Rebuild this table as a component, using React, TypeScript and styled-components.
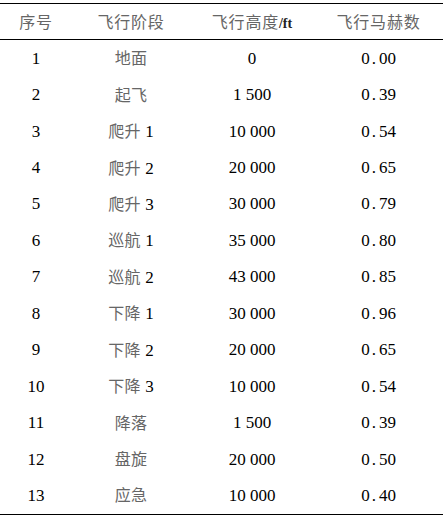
import * as React from 'react';
import styled, { createGlobalStyle } from 'styled-components';

const GlobalStyle = createGlobalStyle`
  html, body {
    margin: 0;
    padding: 0;
    background: #ffffff;
  }
  body {
    font-family: "Liberation Serif", "Times New Roman", serif;
    color: #000000;
  }
`;

const Wrapper = styled.div`
  width: 443px;
  padding-top: 3px;
`;

const Table = styled.div`
  border-top: 1px solid #000;
  border-bottom: 1px solid #000;
`;

const Row = styled.div<{ $head?: boolean }>`
  display: grid;
  grid-template-columns: 72px 118px 124px 1fr;
  align-items: center;
  height: ${(p) => (p.$head ? '35px' : '36.45px')};
  border-bottom: ${(p) => (p.$head ? '1px solid #000' : 'none')};
`;

const Cell = styled.div`
  text-align: center;
  font-family: "Liberation Serif", serif;
  font-size: 17px;
  line-height: 1;
  white-space: nowrap;
`;

const Han = styled.span`
  font-family: "Noto Sans CJK SC", sans-serif;
  font-size: 16px;
  color: #666666;
  letter-spacing: 0.3px;
`;

const HeadHan = styled(Han)`
  letter-spacing: 0.8px;
`;

const Unit = styled.span`
  font-family: "Liberation Serif", serif;
  font-weight: bold;
  font-size: 14px;
  color: #222;
`;

const Dot = styled.span`
  margin: 0 3px 0 2px;
`;

const rows: [string, string, string, string, string][] = [
  ['1', '地面', '', '0', '0.00'],
  ['2', '起飞', '', '1 500', '0.39'],
  ['3', '爬升', '1', '10 000', '0.54'],
  ['4', '爬升', '2', '20 000', '0.65'],
  ['5', '爬升', '3', '30 000', '0.79'],
  ['6', '巡航', '1', '35 000', '0.80'],
  ['7', '巡航', '2', '43 000', '0.85'],
  ['8', '下降', '1', '30 000', '0.96'],
  ['9', '下降', '2', '20 000', '0.65'],
  ['10', '下降', '3', '10 000', '0.54'],
  ['11', '降落', '', '1 500', '0.39'],
  ['12', '盘旋', '', '20 000', '0.50'],
  ['13', '应急', '', '10 000', '0.40'],
];

const Mach: React.FC<{ value: string }> = ({ value }) => {
  const [a, b] = value.split('.');
  return (
    <>
      {a}
      <Dot>.</Dot>
      {b}
    </>
  );
};

const App: React.FC = () => (
  <Wrapper>
    <GlobalStyle />
    <Table>
      <Row $head>
        <Cell><HeadHan>序号</HeadHan></Cell>
        <Cell><HeadHan>飞行阶段</HeadHan></Cell>
        <Cell><HeadHan>飞行高度</HeadHan><Unit>/ft</Unit></Cell>
        <Cell><HeadHan>飞行马赫数</HeadHan></Cell>
      </Row>
      {rows.map(([no, phase, n, alt, mach]) => (
        <Row key={no}>
          <Cell>{no}</Cell>
          <Cell>
            <Han>{phase}</Han>
            {n && ` ${n}`}
          </Cell>
          <Cell>{alt}</Cell>
          <Cell><Mach value={mach} /></Cell>
        </Row>
      ))}
    </Table>
  </Wrapper>
);

export default App;
